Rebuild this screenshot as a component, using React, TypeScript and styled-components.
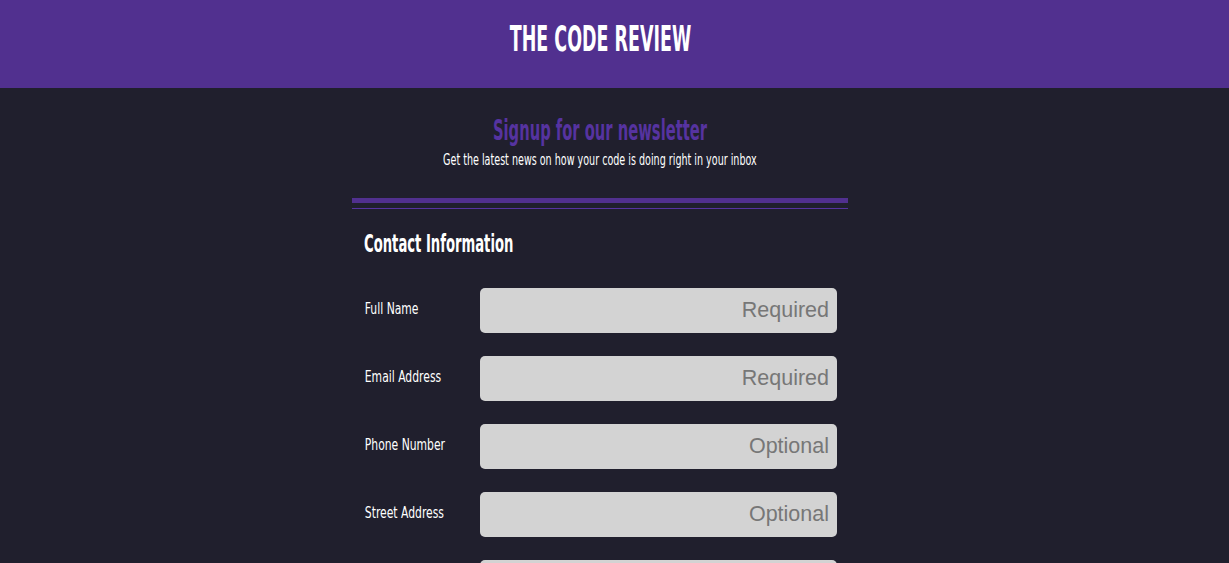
import React from "react";
import styled, { createGlobalStyle } from "styled-components";

const cond = `"DejaVu Sans Condensed", "Liberation Sans Narrow", "Liberation Sans", sans-serif`;

const Global = createGlobalStyle`
  html, body { margin: 0; padding: 0; background: #201f2d; }
  body { font-family: ${cond}; }
  * { box-sizing: border-box; }
`;

const Header = styled.header`
  height: 88px;
  background: #51308f;
`;

const Frame = styled.div`
  width: 1200px;
  height: 100%;
  display: flex;
  justify-content: center;
  align-items: center;
`;

const Title = styled.h1`
  margin: 0;
  font-family: ${cond};
  font-weight: 700;
  font-size: 35px;
  line-height: 40px;
  color: #ffffff;
  transform: scaleX(0.555);
  white-space: nowrap;
  margin-top: -10px;
`;

const Body = styled.div`
  width: 1200px;
  display: flex;
  justify-content: center;
`;

const Main = styled.main`
  width: 496px;
  display: flex;
  flex-direction: column;
`;

const Intro = styled.div`
  padding-top: 28px;
  display: flex;
  flex-direction: column;
  align-items: center;
  gap: 5px;
`;

const Heading = styled.h2`
  margin: 0;
  font-family: ${cond};
  font-weight: 700;
  font-size: 28px;
  line-height: 30px;
  color: #5633a0;
  transform: scaleX(0.585);
  white-space: nowrap;
`;

const Sub = styled.p`
  margin: 0;
  font-family: ${cond};
  font-size: 15px;
  line-height: 18px;
  color: #ffffff;
  transform: scaleX(0.71);
  white-space: nowrap;
`;

const Rule = styled.div`
  margin-top: 29px;
  border-top: 5px solid #51308f;
  height: 11px;
  border-bottom: 1px solid #5633a0;
`;

const Section = styled.section`
  padding: 21px 11px 0 12px;
  display: flex;
  flex-direction: column;
`;

const SectionTitle = styled.h3`
  margin: 0 0 30px;
  font-family: ${cond};
  font-weight: 700;
  font-size: 24px;
  line-height: 28px;
  color: #ffffff;
  transform: scaleX(0.61);
  transform-origin: left center;
  white-space: nowrap;
`;

const Rows = styled.div`
  display: flex;
  flex-direction: column;
  gap: 23px;
`;

const Row = styled.label`
  display: grid;
  grid-template-columns: 116px 1fr;
  align-items: center;
`;

const LabelText = styled.span`
  font-family: ${cond};
  font-size: 15px;
  color: #ffffff;
  padding-left: 1px;
  margin-top: -4px;
  transform: scaleX(0.8);
  transform-origin: left center;
  white-space: nowrap;
`;

const Input = styled.input`
  height: 45px;
  width: 100%;
  border: none;
  border-radius: 5px;
  background: #d3d3d3;
  padding: 0 8px;
  text-align: right;
  font-family: "Liberation Sans", Arial, sans-serif;
  font-size: 21.5px;
  color: #333;
  outline: none;
  &::placeholder { color: #777777; }
`;

const fields = [
  { label: "Full Name", ph: "Required" },
  { label: "Email Address", ph: "Required" },
  { label: "Phone Number", ph: "Optional" },
  { label: "Street Address", ph: "Optional" },
  { label: "City", ph: "Optional" },
];

export default function App() {
  return (
    <>
      <Global />
      <Header>
        <Frame>
          <Title>THE CODE REVIEW</Title>
        </Frame>
      </Header>
      <Body>
        <Main>
          <Intro>
            <Heading>Signup for our newsletter</Heading>
            <Sub>Get the latest news on how your code is doing right in your inbox</Sub>
          </Intro>
          <Rule />
          <Section>
            <SectionTitle>Contact Information</SectionTitle>
            <Rows>
              {fields.map((f) => (
                <Row key={f.label}>
                  <LabelText>{f.label}</LabelText>
                  <Input placeholder={f.ph} />
                </Row>
              ))}
            </Rows>
          </Section>
        </Main>
      </Body>
    </>
  );
}
